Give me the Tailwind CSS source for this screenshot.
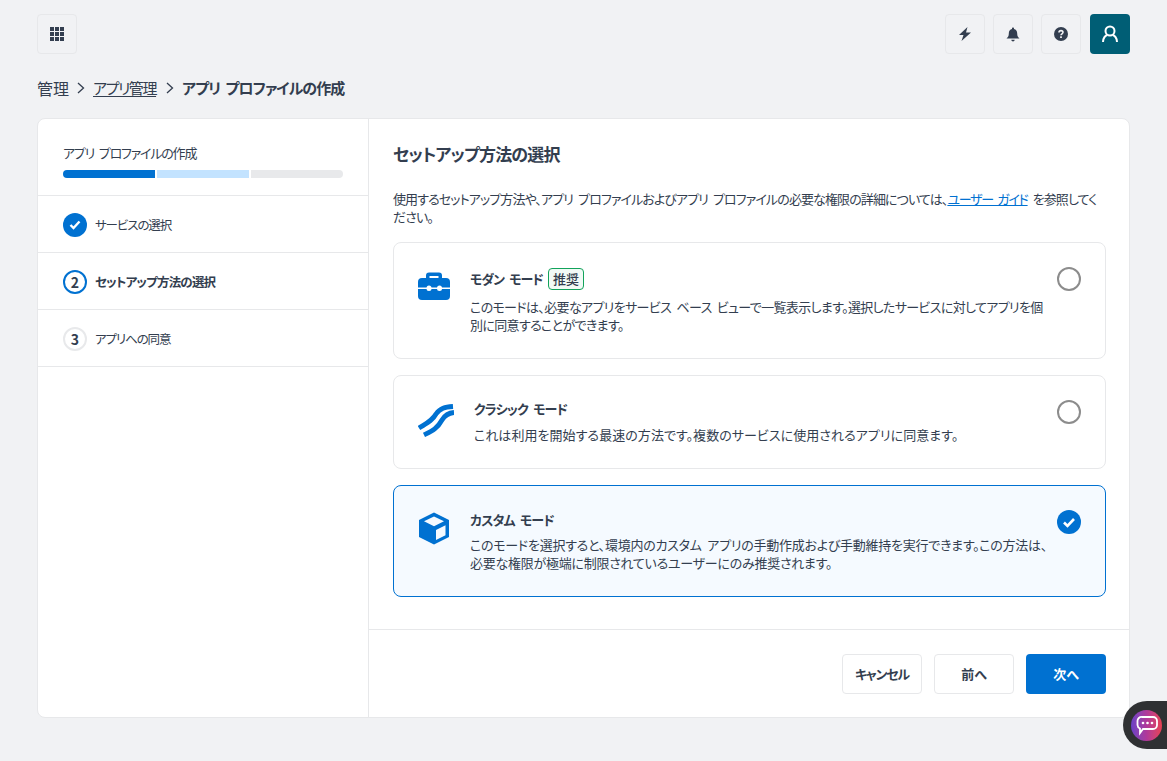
<!DOCTYPE html>
<html lang="ja">
  <head>
    <meta charset="UTF-8" />
    <title>アプリ プロファイルの作成</title>
    <script src="https://cdn.jsdelivr.net/npm/@tailwindcss/browser@4"></script>
  </head>
  <body class="bg-[#f1f2f4] h-[761px] overflow-hidden relative text-[#333e4f] font-['Noto_Sans_CJK_JP','Noto_Sans',sans-serif] [font-feature-settings:'palt'] [word-spacing:3px]">
    <!-- Top bar -->
    <div class="flex justify-between items-center px-[37px] pt-[14px]">
      <button class="w-10 h-10 rounded border border-[#e7e8ea] flex items-center justify-center">
        <svg width="14" height="14" viewBox="0 0 14 14" fill="#333e4f">
          <rect x="0" y="0" width="4" height="4" /><rect x="5" y="0" width="4" height="4" /><rect x="10" y="0" width="4" height="4" />
          <rect x="0" y="5" width="4" height="4" /><rect x="5" y="5" width="4" height="4" /><rect x="10" y="5" width="4" height="4" />
          <rect x="0" y="10" width="4" height="4" /><rect x="5" y="10" width="4" height="4" /><rect x="10" y="10" width="4" height="4" />
        </svg>
      </button>
      <div class="flex gap-2">
        <button class="w-10 h-10 rounded border border-[#e7e8ea] flex items-center justify-center">
          <svg width="14" height="14" viewBox="0 0 14 14" fill="#333e4f"><path d="M9.500 0 L1 8 H5.500 L3.500 14 L13 5.500 H8 Z" /></svg>
        </button>
        <button class="w-10 h-10 rounded border border-[#e7e8ea] flex items-center justify-center">
          <svg width="14" height="15" viewBox="0 0 14 15" fill="#333e4f"><path d="M7 0.500c.6 0 1 .4 1 1v.6c2 .5 3.200 2.200 3.200 4.300 0 2.600.8 3.700 2.300 5.100H.5C2 10.100 2.800 9 2.800 6.400 2.800 4.300 4 2.600 6 2.100v-.6c0-.6.4-1 1-1z" /><path d="M5.300 12.800h3.400C8.600 13.800 7.900 14.500 7 14.500s-1.600-.7-1.700-1.700z" /></svg>
        </button>
        <button class="w-10 h-10 mr-px rounded border border-[#e7e8ea] flex items-center justify-center">
          <svg width="14" height="14" viewBox="0 0 14 14"><circle cx="7" cy="7" r="7" fill="#333e4f" /><path d="M5 5.400C5 4.300 5.900 3.600 7 3.600s2 .7 2 1.700c0 1.500-2 1.500-2 3" fill="none" stroke="#f1f2f4" stroke-width="1.600" /><rect x="6.100" y="9.300" width="1.800" height="1.700" fill="#f1f2f4" /></svg>
        </button>
        <button class="w-10 h-10 rounded bg-[#005e75] flex items-center justify-center">
          <svg width="16" height="18" viewBox="0 0 16 18" fill="none" stroke="#fff" stroke-width="2"><circle cx="8" cy="6" r="4.500" /><path d="M1 17c0-4 2.500-6.500 4-7M15 17c0-4-2.500-6.500-4-7" /></svg>
        </button>
      </div>
    </div>

    <!-- Breadcrumb -->
    <nav class="flex items-center pl-[37px] mt-[19px] h-[30px] text-[16px]">
      <span>管理</span>
      <svg class="mx-[8px]" width="8" height="12" viewBox="0 0 8 12" fill="none" stroke="#333e4f" stroke-width="1.300"><path d="M1 1l5.500 5L1 11" /></svg>
      <a class="underline underline-offset-2 text-[15px] tracking-[-1.400px]">アプリ管理</a>
      <svg class="ml-[10px] mr-[8px]" width="8" height="12" viewBox="0 0 8 12" fill="none" stroke="#333e4f" stroke-width="1.300"><path d="M1 1l5.500 5L1 11" /></svg>
      <span class="font-bold text-[15px] tracking-[-0.95px]">アプリ プロファイルの作成</span>
    </nav>

    <!-- Main card -->
    <div class="mx-[37px] mt-[15px] h-[600px] bg-white rounded-lg border border-[#e7e8ea] flex">
      <!-- Stepper -->
      <aside class="w-[331px] shrink-0 border-r border-[#e7e8ea]">
        <div class="h-[77px] px-[25px] pt-[24px] border-b border-[#e7e8ea]">
          <div class="text-[13px] leading-[20px] tracking-[-1.200px]">アプリ プロファイルの作成</div>
          <div class="flex gap-[2px] mt-[7px] h-2 w-[280px] rounded overflow-hidden">
            <div class="flex-1 bg-[#0071d1]"></div>
            <div class="flex-1 bg-[#c3e3ff]"></div>
            <div class="flex-1 bg-[#e8e9eb]"></div>
          </div>
        </div>
        <div class="h-[57px] px-[25px] pt-[2px] flex items-center gap-2 border-b border-[#e7e8ea]">
          <span class="w-6 h-6 rounded-full bg-[#0071d1] flex items-center justify-center">
            <svg width="12" height="10" viewBox="0 0 12 10" fill="none" stroke="#fff" stroke-width="2.400"><path d="M1.500 5l3 3 6-6.500" /></svg>
          </span>
          <span class="text-[12.5px] tracking-[-1.100px]">サービスの選択</span>
        </div>
        <div class="h-[57px] px-[25px] pt-[2px] flex items-center gap-2 border-b border-[#e7e8ea]">
          <span class="w-6 h-6 rounded-full border-2 border-[#0071d1] flex items-center justify-center text-[14px] font-bold">2</span>
          <span class="text-[12.5px] tracking-[-0.8px] font-bold">セットアップ方法の選択</span>
        </div>
        <div class="h-[57px] px-[25px] pt-[2px] flex items-center gap-2 border-b border-[#e7e8ea]">
          <span class="w-6 h-6 rounded-full border-2 border-[#e8e9eb] flex items-center justify-center text-[14px] font-bold">3</span>
          <span class="text-[12.5px] tracking-[-1.100px]">アプリへの同意</span>
        </div>
      </aside>

      <!-- Content -->
      <main class="flex-1 flex flex-col">
        <div class="flex-1 pl-[24px] pr-[23px] pt-[21px]">
          <h1 class="text-[17px] leading-[28px] font-bold tracking-[-0.8px]">セットアップ方法の選択</h1>
          <p class="mt-[22px] text-[13px] leading-[18px] tracking-[-0.9px]">使用するセットアップ方法や、アプリ プロファイルおよびアプリ プロファイルの必要な権限の詳細については、<a class="text-[#0071d1] underline tracking-[-1.300px]">ユーザー ガイド</a> を参照してください。</p>

          <div class="mt-[16px] h-[117px] rounded-lg border border-[#e7e8ea] px-[24px] flex items-start">
            <svg class="mt-[29px] shrink-0" width="32" height="28" viewBox="0 0 32 28" fill="#0071d1">
              <path d="M8 6V3.500A3 3 0 0 1 11 .5h10a3 3 0 0 1 3 3V6h-3.500V4h-9v2z" />
              <path d="M0 10a4 4 0 0 1 4-4h24a4 4 0 0 1 4 4v5.500H0z" />
              <path d="M0 17h32v7a4 4 0 0 1-4 4H4a4 4 0 0 1-4-4z" />
              <rect x="8.500" y="13.500" width="5" height="5.500" rx="2.500" fill="#fff" />
              <rect x="19" y="13.500" width="5" height="5.500" rx="2.500" fill="#fff" />
            </svg>
            <div class="ml-[20px] w-[580px] shrink-0 pt-[25px]">
              <div class="flex items-center gap-[5px] h-[22px]">
                <span class="text-[13px] font-bold tracking-[-0.9px]">モダン モード</span>
                <span class="h-[22px] px-[4px] rounded border border-[#12a35b] bg-[#f2faf6] text-[13px] font-medium flex items-center">推奨</span>
              </div>
              <p class="mt-[8px] text-[13px] leading-[18px] tracking-[-0.65px]">このモードは、必要なアプリをサービス ベース ビューで一覧表示します。選択したサービスに対してアプリを個別に同意することができます。</p>
            </div>
            <span class="mt-[24px] ml-auto shrink-0 w-6 h-6 rounded-full border-2 border-[#8c8c8c]"></span>
          </div>

          <div class="mt-[16px] h-[94px] rounded-lg border border-[#e7e8ea] px-[24px] flex items-start">
            <svg class="mt-[27px] shrink-0" width="36" height="34" viewBox="0 0 36 34" fill="none" stroke="#0071d1" stroke-width="4.800">
              <path d="M1 25 C9 20 14 18 18 11 C22 5 27 4 35 3.500" />
              <path d="M6 32 C14 28 19 26 24 17 C27 12 30 10 36 9.500" />
            </svg>
            <div class="ml-[20px] flex-1 pt-[22px]">
              <div class="text-[13px] font-bold leading-[22px] tracking-[-0.8px]">クラシック モード</div>
              <p class="mt-[6px] text-[13px] leading-[18px] tracking-[0.05px]">これは利用を開始する最速の方法です。複数のサービスに使用されるアプリに同意ます。</p>
            </div>
            <span class="mt-[24px] ml-[12px] shrink-0 w-6 h-6 rounded-full border-2 border-[#8c8c8c]"></span>
          </div>

          <div class="mt-[16px] h-[112px] rounded-lg border border-[#0071d1] bg-[#f5faff] px-[24px] flex items-start">
            <svg class="mt-[26px] shrink-0" width="32" height="33" viewBox="2 0 30 33">
              <path d="M17 0.500l15 7.500v17l-15 7.500-15-7.500V8z" fill="#0071d1" />
              <path d="M17 4.500l10 4.800-10 5-10-5z" fill="#f5faff" />
              <path d="M19 18l9.500-4.800v10l-9.500 4.800z" fill="#f5faff" />
            </svg>
            <div class="ml-[20px] w-[580px] shrink-0 pt-[23px]">
              <div class="text-[13px] font-bold leading-[22px] tracking-[-0.8px]">カスタム モード</div>
              <p class="mt-[5px] text-[13px] leading-[18px] tracking-[-0.26px]">このモードを選択すると、環境内のカスタム アプリの手動作成および手動維持を実行できます。この方法は、必要な権限が極端に制限されているユーザーにのみ推奨されます。</p>
            </div>
            <span class="mt-[24px] ml-auto shrink-0 w-6 h-6 rounded-full bg-[#0071d1] flex items-center justify-center">
              <svg width="14" height="11" viewBox="0 0 14 11" fill="none" stroke="#fff" stroke-width="2.600"><path d="M2 5.500l3.500 3.500 6.500-7" /></svg>
            </span>
          </div>
        </div>

        <!-- Footer -->
        <div class="h-[88px] border-t border-[#e7e8ea] pl-[24px] pr-[23px] flex items-center justify-end gap-3">
          <button class="w-20 h-10 rounded border border-[#e7e8ea] bg-white text-[13px] font-bold tracking-[-1.200px]">キャンセル</button>
          <button class="w-20 h-10 rounded border border-[#e7e8ea] bg-white text-[13px] font-bold">前へ</button>
          <button class="w-20 h-10 rounded bg-[#0071d1] text-white text-[13px] font-bold">次へ</button>
        </div>
      </main>
    </div>

    <!-- Chat widget -->
    <div class="absolute right-0 top-[701px] w-[44px] h-[48px] bg-[#2f3133] rounded-l-[24px] flex items-center pl-[8px]">
      <span class="w-[31px] h-[31px] rounded-full bg-gradient-to-r from-[#6a3fc8] via-[#b0389a] to-[#e8404f] flex items-center justify-center">
        <svg width="24" height="24" viewBox="0 0 24 24" fill="none" stroke="#fff" stroke-width="1.800">
          <path d="M7 4h11a4 4 0 0 1 4 4v4a4 4 0 0 1-4 4H8l-3 4v-4.500A4 4 0 0 1 2.500 12V8A4 4 0 0 1 7 4z" />
          <circle cx="8" cy="10" r="1.300" fill="#fff" stroke="none" /><circle cx="12.500" cy="10" r="1.300" fill="#fff" stroke="none" /><circle cx="17" cy="10" r="1.300" fill="#fff" stroke="none" />
        </svg>
      </span>
    </div>
  </body>
</html>
